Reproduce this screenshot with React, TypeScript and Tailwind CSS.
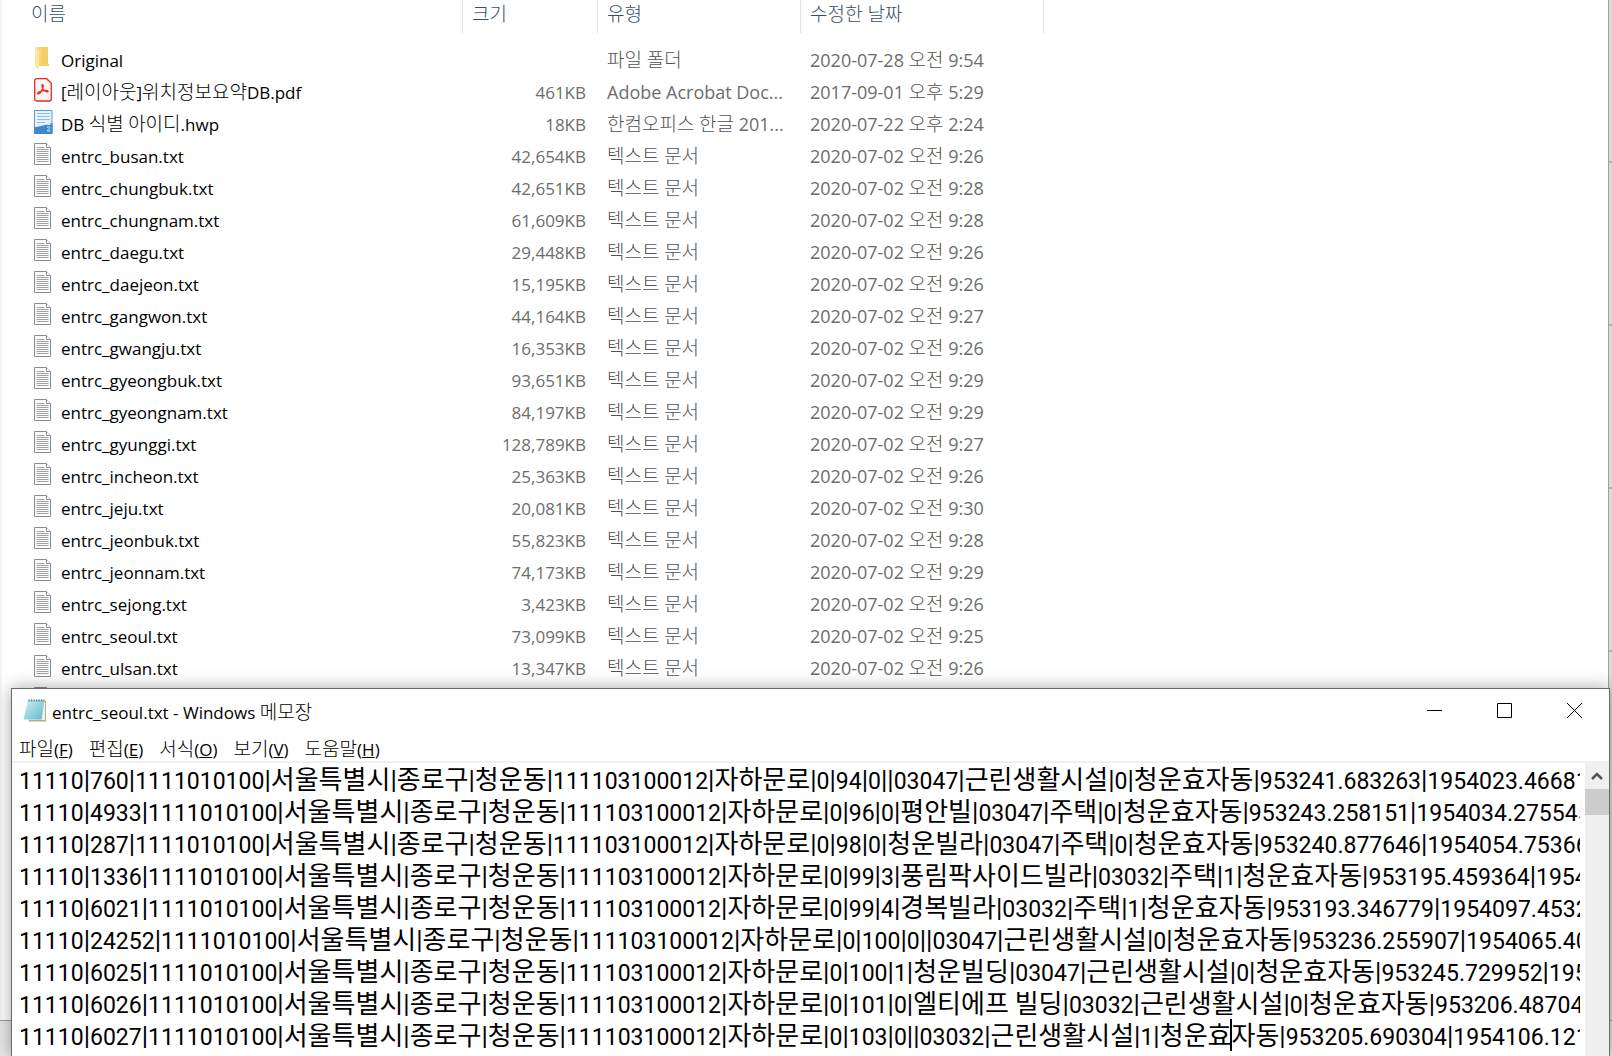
import React from "react";

const UI_FONT = "font-['Open_Sans','Noto_Sans_CJK_KR',sans-serif]";
const HANGUL = /([\u3131-\uD79D]+)/;

/* Hangul runs are set slightly larger than the Latin text around them. */
function Mixed({ text, tone = "" }: { text: string; tone?: string }) {
  return (
    <>
      {text.split(HANGUL).filter(Boolean).map((run, i) =>
        HANGUL.test(run) ? (
          <span key={i} className={"text-[19px] leading-none font-light " + tone}>{run}</span>
        ) : (
          <span key={i}>{run}</span>
        )
      )}
    </>
  );
}

type Kind = "folder" | "pdf" | "hwp" | "txt";
type FileRow = { kind: Kind; name: string; size: string; type: string; date: string };

const txt = (name: string, size: string, time: string): FileRow => ({
  kind: "txt",
  name,
  size,
  type: name ? "텍스트 문서" : "",
  date: time ? "2020-07-02 오전 " + time : "",
});

const files: FileRow[] = [
  { kind: "folder", name: "Original", size: "", type: "파일 폴더", date: "2020-07-28 오전 9:54" },
  { kind: "pdf", name: "[레이아웃]위치정보요약DB.pdf", size: "461KB", type: "Adobe Acrobat Doc...", date: "2017-09-01 오후 5:29" },
  { kind: "hwp", name: "DB 식별 아이디.hwp", size: "18KB", type: "한컴오피스 한글 201...", date: "2020-07-22 오후 2:24" },
  txt("entrc_busan.txt", "42,654KB", "9:26"),
  txt("entrc_chungbuk.txt", "42,651KB", "9:28"),
  txt("entrc_chungnam.txt", "61,609KB", "9:28"),
  txt("entrc_daegu.txt", "29,448KB", "9:26"),
  txt("entrc_daejeon.txt", "15,195KB", "9:26"),
  txt("entrc_gangwon.txt", "44,164KB", "9:27"),
  txt("entrc_gwangju.txt", "16,353KB", "9:26"),
  txt("entrc_gyeongbuk.txt", "93,651KB", "9:29"),
  txt("entrc_gyeongnam.txt", "84,197KB", "9:29"),
  txt("entrc_gyunggi.txt", "128,789KB", "9:27"),
  txt("entrc_incheon.txt", "25,363KB", "9:26"),
  txt("entrc_jeju.txt", "20,081KB", "9:30"),
  txt("entrc_jeonbuk.txt", "55,823KB", "9:28"),
  txt("entrc_jeonnam.txt", "74,173KB", "9:29"),
  txt("entrc_sejong.txt", "3,423KB", "9:26"),
  txt("entrc_seoul.txt", "73,099KB", "9:25"),
  txt("entrc_ulsan.txt", "13,347KB", "9:26"),
  txt("", "", ""),
];

const CARET = "\u2038";
const ROAD = "|1111010100|서울특별시|종로구|청운동|111103100012|자하문로|0|";
const lines = [
  "11110|760" + ROAD + "94|0||03047|근린생활시설|0|청운효자동|953241.683263|1954023.46681",
  "11110|4933" + ROAD + "96|0|평안빌|03047|주택|0|청운효자동|953243.258151|1954034.275545",
  "11110|287" + ROAD + "98|0|청운빌라|03047|주택|0|청운효자동|953240.877646|1954054.75366",
  "11110|1336" + ROAD + "99|3|풍림팍사이드빌라|03032|주택|1|청운효자동|953195.459364|1954",
  "11110|6021" + ROAD + "99|4|경복빌라|03032|주택|1|청운효자동|953193.346779|1954097.4532",
  "11110|24252" + ROAD + "100|0||03047|근린생활시설|0|청운효자동|953236.255907|1954065.40",
  "11110|6025" + ROAD + "100|1|청운빌딩|03047|근린생활시설|0|청운효자동|953245.729952|195",
  "11110|6026" + ROAD + "101|0|엘티에프 빌딩|03032|근린생활시설|0|청운효자동|953206.48704",
  "11110|6027" + ROAD + "103|0||03032|근린생활시설|1|청운효" + CARET + "자동|953205.690304|1954106.121",
];

function FileIcon({ kind }: { kind: Kind }) {
  if (kind === "folder")
    return (
      <svg width="18" height="24" viewBox="0 0 18 24" aria-hidden="true">
        <path d="M2 1h12v17h1v2H5z" fill="#f7d673" />
        <path d="M8 1h6v17h1v2H7z" fill="#f0ca62" opacity=".6" />
        <path d="M1 1l4 3v19l-4-2z" fill="#fde8a2" />
      </svg>
    );
  if (kind === "pdf")
    return (
      <svg width="18" height="24" viewBox="0 0 18 24" aria-hidden="true" fill="none" stroke="#f0271c">
        <path d="M2.700.7h10l4.600 4.600v15.700a2 2 0 0 1-2 2H2.700a2 2 0 0 1-2-2V2.700a2 2 0 0 1 2-2z" fill="#f6f6f5" strokeWidth="1.300" />
        <path d="M8.500 6.500c1.100 0 .9 2 .2 3.700-.8 2-2.300 4.900-3.800 5.600-1.500.6-1.800-.8-.3-1.700 2.200-1.200 6.200-1.900 8.300-1.600 2 .3 1.500 1.700-.2 1.400-2-.4-4-2.900-4.500-4.700-.3-1.200-.4-2.700.3-2.700z" strokeWidth="1.200" />
      </svg>
    );
  if (kind === "hwp")
    return (
      <svg width="19" height="24" viewBox="0 0 19 24" aria-hidden="true">
        <path d="M.5.5h17.500v23H.5z" fill="#e8f2fb" stroke="#5a9bd3" />
        <path d="M3 3.500h13M3 6.500h13M3 9.500h13M3 12.500h8" stroke="#8fbce6" />
        <path d="M0 17.500c6-1.500 12-2.500 18.500-4.500V24H0z" fill="#3f88cc" />
        <path d="M12.500 14.500h4M13 17.500q2-1.500 3 0c0 1.500-2.500 1.500-2.500 3.500h3" stroke="#dcebf8" fill="none" />
      </svg>
    );
  return (
    <svg width="17" height="22" viewBox="0 0 17 22" aria-hidden="true">
      <path d="M.5.500h12l4 4v17H.5z" fill="#fbfbfb" stroke="#8d8d8d" />
      <path d="M12.500.500v4h4" fill="#fff" stroke="#8d8d8d" />
      <path d="M2.500 4.500h8M2.500 6.500h12M2.500 8.500h12M2.500 10.500h12M2.500 12.500h12M2.500 14.500h12M2.500 16.500h12M2.500 18.500h12" stroke="#a3a3a3" />
    </svg>
  );
}

function NotepadIcon() {
  return (
    <svg width="24" height="24" viewBox="0 0 24 24" aria-hidden="true">
      <defs>
        <linearGradient id="pad" x1="0" y1="0" x2="1" y2="1">
          <stop offset="0" stopColor="#d6f1f6" />
          <stop offset=".6" stopColor="#8ccfde" />
          <stop offset="1" stopColor="#5fb2c8" />
        </linearGradient>
      </defs>
      <path d="M6 3h17v20.500H6z" fill="#b9ab83" />
      <path d="M6 3h16v19H6z" fill="#f4f1e4" />
      <path d="M5 2h16.500L18.500 21.500H.5z" fill="url(#pad)" />
      <path d="M5.500 2.500h16" stroke="#55727b" strokeWidth="2" strokeDasharray="1.200 1.300" />
    </svg>
  );
}

function Explorer() {
  const head = "h-[33px] p-0 text-left align-top font-light border-r border-[#e3e3e3]";
  const cols = [
    { label: "이름", cls: "pl-[29px]" },
    { label: "크기", cls: "pl-[9px]" },
    { label: "유형", cls: "pl-[9px]" },
    { label: "수정한 날짜", cls: "pl-[9px]" },
  ];
  return (
    <main className="h-[1020px] min-w-0 flex-1 overflow-hidden border-l-2 border-[#f4f4f4] bg-white">
      <table className={"w-full table-fixed border-separate border-spacing-0 text-[18px] whitespace-nowrap " + UI_FONT}>
        <colgroup>
          <col className="w-[461px]" />
          <col className="w-[135px]" />
          <col className="w-[203px]" />
          <col className="w-[243px]" />
          <col />
        </colgroup>
        <thead>
          <tr className="text-[#3a4e6b]">
            {cols.map((c) => (
              <th key={c.label} scope="col" className={head + " " + c.cls}>
                <button type="button" className="h-7 text-[19px] leading-7">{c.label}</button>
              </th>
            ))}
            <td />
          </tr>
          <tr className="h-[11px]"><td colSpan={5} className="p-0" /></tr>
        </thead>
        <tbody className="text-[#6d6d6d]">
          {files.map((f, i) => (
            <tr key={i} className="h-8">
              <td className="p-0 pl-8">
                <div className="flex h-8 items-center text-black">
                  <span className="mb-1 flex w-[27px] shrink-0"><FileIcon kind={f.kind} /></span>
                  <span className="h-8 text-[17px] leading-[34px]"><Mixed text={f.name} /></span>
                </div>
              </td>
              <td className="p-0 pr-3 text-right text-[17px]"><div className="h-8 leading-[34px]">{f.size}</div></td>
              <td className="p-0 pl-[9px]"><div className="h-8 leading-8"><Mixed text={f.type} tone="text-[#525252]" /></div></td>
              <td className="p-0 pl-[9px]"><div className="h-8 leading-8"><Mixed text={f.date} tone="text-[#525252]" /></div></td>
              <td />
            </tr>
          ))}
        </tbody>
      </table>
    </main>
  );
}

/* Sliver of the window that shows behind the explorer's right edge. */
function BackWindowEdge() {
  return (
    <div className="w-1 shrink-0 border-l border-[#a0a0a0]" aria-hidden="true">
      {[0, 1, 2, 3].map((n) => (
        <div key={n} className="h-[163px] border-b-2 border-[#b4b4b4]" />
      ))}
    </div>
  );
}

const menus = [
  ["파일", "F"],
  ["편집", "E"],
  ["서식", "O"],
  ["보기", "V"],
  ["도움말", "H"],
];

function EditorRun({ text }: { text: string }) {
  return (
    <>
      {text.split(/([\u3131-\uD79D ]+|\|+)/).filter(Boolean).map((run, i) => {
        if (run[0] === "|") return <span key={i} className="text-[26px] leading-none">{run}</span>;
        if (HANGUL.test(run)) return <span key={i} className="font-['Noto_Sans_CJK_KR',sans-serif] text-[26px] leading-none">{run}</span>;
        return <span key={i}>{run}</span>;
      })}
    </>
  );
}

function EditorLine({ text }: { text: string }) {
  const [before, after] = text.split(CARET);
  return (
    <div className="flex h-8 items-baseline whitespace-pre leading-[38px]">
      <EditorRun text={before} />
      {after && (
        <>
          <span aria-hidden="true" className="-mx-px w-0.5 shrink-0 self-stretch bg-black" />
          <EditorRun text={after} />
        </>
      )}
    </div>
  );
}

function Notepad() {
  return (
    <section
      aria-label="메모장"
      className={"absolute top-[688px] right-[2px] bottom-0 left-[11px] flex flex-col border border-b-0 border-[#6a6a6a] bg-white text-black shadow-[0_0_16px_rgba(0,0,0,0.35)] " + UI_FONT}
    >
      <header className="flex h-[42px] shrink-0 items-center pl-[11px] text-[17px]">
        <NotepadIcon />
        <h1 className="ml-[5px] flex-1 pt-1.5 leading-8"><Mixed text="entrc_seoul.txt - Windows 메모장" /></h1>
        <button type="button" aria-label="최소화" className="flex h-full w-[70px] items-center justify-center">
          <svg width="15" height="15" viewBox="0 0 15 15"><path d="M0 7.500h15" stroke="#000" /></svg>
        </button>
        <button type="button" aria-label="최대화" className="flex h-full w-[70px] items-center justify-center">
          <svg width="15" height="15" viewBox="0 0 15 15"><path d="M.5.500h14v14H.5z" stroke="#000" fill="none" /></svg>
        </button>
        <button type="button" aria-label="닫기" className="flex h-full w-[70px] items-center justify-center">
          <svg width="15" height="15" viewBox="0 0 15 15"><path d="M0 0l15 15M15 0L0 15" stroke="#000" /></svg>
        </button>
      </header>
      <nav className="flex h-8 shrink-0 items-end gap-4 border-b-2 border-[#f0f0f0] pl-[7px] text-[17px]">
        {menus.map(([label, key]) => (
          <button key={key} type="button" className="h-6 leading-[26px]">
            <span className="text-[19px] leading-none font-light">{label}</span>(<u>{key}</u>)
          </button>
        ))}
      </nav>
      <div className="flex min-h-0 flex-1">
        <div
          role="textbox"
          aria-multiline="true"
          aria-label="문서 내용"
          contentEditable
          suppressContentEditableWarning
          spellCheck={false}
          className="mr-[5px] ml-[7px] min-w-0 flex-1 overflow-x-clip font-['Roboto',sans-serif] text-[23px] outline-none"
        >
          {lines.map((l, i) => <EditorLine key={i} text={l} />)}
        </div>
        <div className="flex w-6 shrink-0 flex-col bg-[#f0f0f0]">
          <button type="button" aria-label="위로 스크롤" className="flex h-[26px] items-center justify-center">
            <svg width="12" height="10" viewBox="0 0 12 10"><path d="M1 8l5-5 5 5" stroke="#555" strokeWidth="2.500" fill="none" /></svg>
          </button>
          <div className="h-[26px] bg-[#cdcdcd]" />
        </div>
      </div>
    </section>
  );
}

export default function App() {
  return (
    <div className="relative h-screen overflow-hidden bg-[#dcdcdc]">
      <div className="flex">
        <Explorer />
        <BackWindowEdge />
      </div>
      <div className="h-9 w-full border-t border-[#9a9a9a] bg-[#e6e6e6]" />
      <Notepad />
    </div>
  );
}
